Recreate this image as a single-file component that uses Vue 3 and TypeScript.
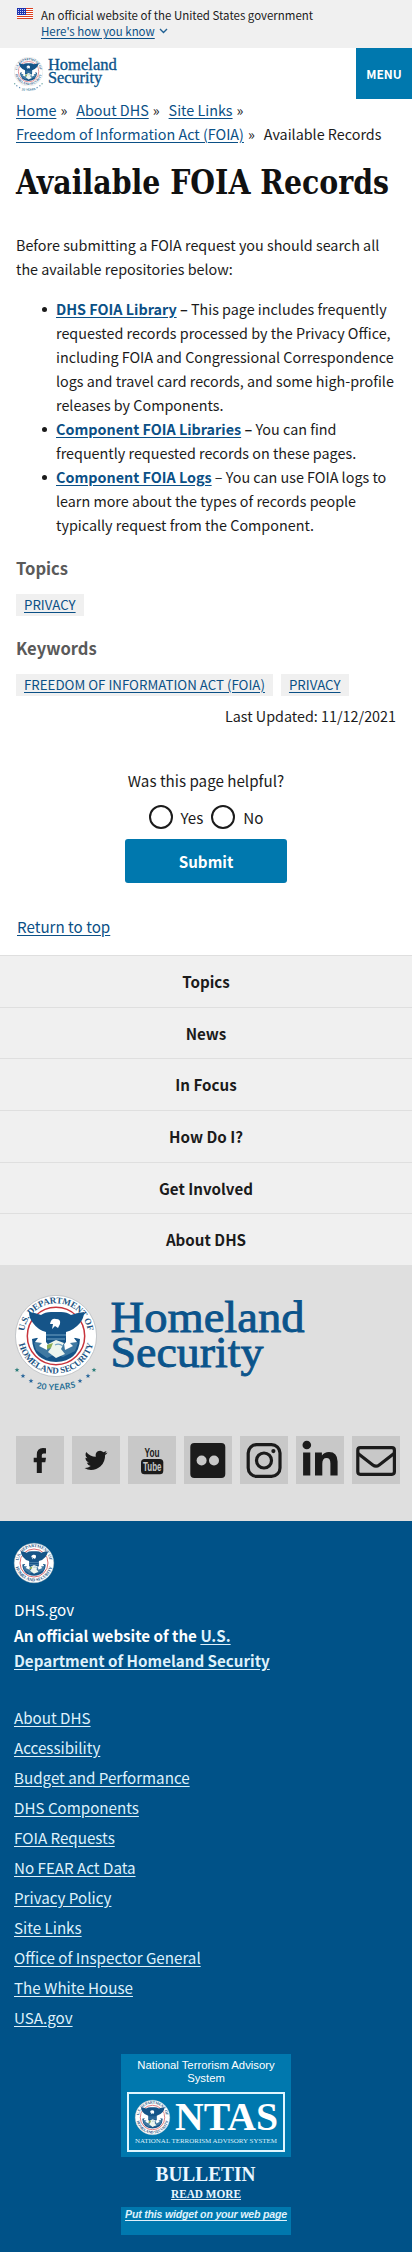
<script setup lang="ts">
import { defineComponent, h } from 'vue'

const crumbs: string[] = ['Home', 'About DHS', 'Site Links', 'Freedom of Information Act (FOIA)']
const navItems: string[] = ['Topics', 'News', 'In Focus', 'How Do I?', 'Get Involved', 'About DHS']
const footerLinks: string[] = [
  'About DHS', 'Accessibility', 'Budget and Performance', 'DHS Components', 'FOIA Requests',
  'No FEAR Act Data', 'Privacy Policy', 'Site Links', 'Office of Inspector General',
  'The White House', 'USA.gov',
]

// Round agency seal; the ring lettering needs a unique arc id per instance.
const Seal = defineComponent({
  props: { uid: { type: String, required: true } },
  setup(props) {
    const ring = (id: string, d: string, label: string, len: number) => [
      h('path', { id, d, fill: 'none' }),
      h('text', { 'font-family': '"Liberation Serif", serif', 'font-size': 9, 'font-weight': 700, fill: '#1d5584' }, [
        h('textPath', { href: '#' + id, startOffset: '50%', 'text-anchor': 'middle', textLength: len }, label),
      ]),
    ]
    return () => h('svg', { viewBox: '0 0 82 82' }, [
      h('circle', { cx: 41, cy: 41, r: 40.6, fill: '#fff', stroke: '#b9bdc0', 'stroke-width': 0.8 }),
      ...ring(props.uid + 't', 'M9.6 46.5 A32 32 0 1 1 72.4 46.5', 'U.S. DEPARTMENT OF', 92),
      ...ring(props.uid + 'b', 'M3.4 46 A38 38 0 0 0 78.6 46', 'HOMELAND SECURITY', 102),
      h('circle', { cx: 41, cy: 41, r: 28.7, fill: '#fff', stroke: '#c8343c', 'stroke-width': 1.5 }),
      h('path', { fill: '#155488', d: 'M17 44 Q18 66 41 67 Q64 66 65 44 L52 41 H30Z' }),
      h('path', { fill: '#5d92b4', d: 'M19 48 L25 44 31 48 36 44 41 48 47 44 53 48 58 44 63 48 60 56 48 62 41 59 32 63 21 55Z', opacity: 0.6 }),
      h('path', { fill: '#fff', d: 'M15 30 L27 34 34 42 32 55 24 51 27 48 20 47 23 43 17 41 20 37 16 36Z M67 30 L55 34 48 42 50 55 58 51 55 48 62 47 59 43 65 41 62 37 66 36Z' }),
      h('path', { fill: '#155488', d: 'M14 17 Q21 18 26 20 Q30 17 36 17 H46 Q52 17 56 20 Q61 18 69 17 Q69 23 65 28 Q59 35 51 37 V47 Q48 51 41 54 Q34 51 31 47 V37 Q23 35 18 28 Q14 23 14 17Z' }),
      h('path', { fill: '#fff', d: 'M35 29 Q36 23 41 24 Q46 24 45 29 L43 33 40 31 37 34 38 29Z' }),
      h('path', { stroke: '#72a3c4', 'stroke-width': 1, fill: 'none', d: 'M31 40 H51 M32 44 H50' }),
      h('path', { fill: '#eef5ee', d: 'M33 49 L41 45 49 48 46 54 50 59 41 63 33 57 36 53Z' }),
      h('path', { fill: '#8caf55', d: 'M32 50 L38 48 36 53 32 54Z' }),
      h('path', { stroke: '#72a3c4', 'stroke-width': 1.2, fill: 'none', d: 'M40 50 Q44 48 48 51' }),
    ])
  },
})

// Logotype: seal, anniversary stars and two-line wordmark.
const Logo = defineComponent({
  props: { uid: { type: String, required: true } },
  setup(props) {
    const star = 'M0 -2.4 L.7 -.8 2.4 -.7 1 .4 1.5 2.1 0 1.1 -1.5 2.1 -1 .4 -2.4 -.7 -.7 -.8Z'
    const stars: number[][] = [[2, 75], [8, 81], [16, 86], [65, 86], [73, 81], [79, 75]]
    const word = (y: number, len: number, label: string) =>
      h('text', { x: 95.5, y, textLength: len, lengthAdjust: 'spacingAndGlyphs', 'font-family': '"Liberation Serif", serif', 'font-size': 45, fill: '#0b548b', stroke: '#0b548b', 'stroke-width': 0.9 }, label)
    return () => h('svg', { viewBox: '0 0 290 98', overflow: 'visible' }, [
      h(Seal, { uid: props.uid, x: 0, y: 0, width: 82, height: 82 }),
      ...stars.map(([x, y], i) => h('path', { d: star, transform: `translate(${x} ${y})`, fill: i === 0 || i === 5 ? '#287c78' : '#27659a' })),
      h('path', { id: props.uid + 'y', d: 'M18 92.5 Q40.5 98 64 91.5', fill: 'none' }),
      h('text', { 'font-family': 'Lato, sans-serif', 'font-size': 8.5, 'font-weight': 700, fill: '#286f95' }, [
        h('textPath', { href: '#' + props.uid + 'y', startOffset: '50%', 'text-anchor': 'middle', textLength: 40 }, '20 YEARS'),
      ]),
      word(36.5, 194, 'Homeland'),
      word(72, 153, 'Security'),
    ])
  },
})
</script>

<template>
  <div class="page">
    <section class="banner">
      <svg class="flag" viewBox="0 0 16 11">
        <rect width="16" height="11" fill="#fff" />
        <path d="M0 .5H16M0 2.5H16M0 4.5H16M0 6.5H16M0 8.5H16M0 10.5H16" stroke="#db3e1f" />
        <rect width="9" height="7" fill="#1e33b1" />
        <path d="M1 1.5H9M1 3.5H9M1 5.5H9" stroke="#fff" stroke-width=".8" stroke-dasharray="1 1" />
      </svg>
      <div>
        <p class="b1">An official website of the United States government</p>
        <p class="b2">
          <a>Here's how you know</a>
          <svg width="9" height="6" viewBox="0 0 9 6"><path d="M1 1 L4.5 4.4 8 1" fill="none" stroke="#1f6093" stroke-width="1.4" /></svg>
        </p>
      </div>
    </section>

    <header class="header">
      <Logo uid="top" class="logo-top" />
      <button class="menu">MENU</button>
    </header>

    <main class="main">
      <nav class="crumbs">
        <template v-for="(c, i) in crumbs" :key="c">
          <br v-if="i === 3" />
          <span class="crumb"><a>{{ c }}</a><i>»</i></span>
        </template>
        <span>Available Records</span>
      </nav>
      <svg class="title" viewBox="0 0 380 50" role="heading">
        <text x="0" y="37.5" textLength="373" lengthAdjust="spacingAndGlyphs">Available FOIA Records</text>
      </svg>

      <p class="intro">Before submitting a FOIA request you should search all<br />the available repositories below:</p>
      <ul class="list">
        <li>
          <b><a>DHS FOIA Library</a> –</b> This page includes frequently<br />requested records processed by the Privacy Office,<br />including FOIA and Congressional Correspondence<br />logs and travel card records, and some high-profile<br />releases by Components.
        </li>
        <li><b><a>Component FOIA Libraries</a> –</b> You can find<br />frequently requested records on these pages.</li>
        <li><b><a>Component FOIA Logs</a></b> – You can use FOIA logs to<br />learn more about the types of records people<br />typically request from the Component.</li>
      </ul>

      <h3>Topics</h3>
      <div class="tags"><a>PRIVACY</a></div>
      <h3>Keywords</h3>
      <div class="tags"><a>FREEDOM OF INFORMATION ACT (FOIA)</a><a>PRIVACY</a></div>
      <p class="updated">Last Updated: 11/12/2021</p>

      <form class="poll">
        <p>Was this page helpful?</p>
        <div class="choices">
          <label><span class="radio"></span>Yes</label>
          <label><span class="radio"></span>No</label>
        </div>
        <button type="button">Submit</button>
      </form>
      <a class="return">Return to top</a>
    </main>

    <nav class="nav">
      <a v-for="n in navItems" :key="n">{{ n }}</a>
    </nav>

    <section class="brand">
      <Logo uid="big" class="logo-big" />
      <div class="social">
        <a><svg viewBox="0 0 48 48"><path d="M30 12.2V17.4H27.5Q25.8 17.4 25.8 19.2V21.7H30L29.3 26.2H25.8V37H20.8V26.2H17.7V21.7H20.8V18.7Q20.8 12.2 27 12.1Z" /></svg></a>
        <a><svg viewBox="0 0 48 48"><path d="M35.5 16.4 Q34.7 17.9 33.1 18.9 Q33.3 25.5 28.6 30.3 Q24.6 34 19 34 Q15.5 34 12.5 32.1 Q16 32.3 18.7 30 Q16 29.6 14.8 26.7 L17 26.6 Q13.5 25.2 13.4 21.8 L15.5 22.3 Q12.4 19.7 14.2 15.9 Q18 20.4 23.8 20.7 Q23 16.9 25.8 15.3 Q28.8 13.7 31.5 16.2 L34.5 15.1 Q34 16.8 32.7 17.4Z" /></svg></a>
        <a><svg viewBox="0 0 48 48"><text class="yt" x="16.5" y="21" textLength="15" lengthAdjust="spacingAndGlyphs">You</text><rect x="13" y="23" width="22.3" height="15.2" rx="3.5" /><text class="yt light" x="15" y="35.4" textLength="18.5" lengthAdjust="spacingAndGlyphs">Tube</text></svg></a>
        <a><svg viewBox="0 0 48 48"><rect x="6.3" y="7" width="35" height="35" rx="4" /><circle cx="17.6" cy="24.5" r="5" fill="#c8c8c8" /><circle cx="30" cy="24.5" r="5" fill="#c8c8c8" /></svg></a>
        <a><svg viewBox="0 0 48 48"><g fill="none" stroke="#1b1b1b" stroke-width="3.2"><rect x="8.2" y="8.6" width="31.8" height="31.8" rx="8.5" /><circle cx="24" cy="24.5" r="7.5" /></g><circle cx="33.4" cy="15.1" r="2.1" /></svg></a>
        <a><svg viewBox="0 0 48 48"><circle cx="10.8" cy="9" r="4.3" /><path d="M7.1 16.5H14.3V39.4H7.1Z M19 16.5H25.9V19.6Q28.2 15.9 33 15.9 Q41.5 15.9 41.6 25.5V39.4H34.4V27.4Q34.4 22.1 30.5 22.1 Q26.3 22.1 26.3 27.8V39.4H19Z" /></svg></a>
        <a><svg viewBox="0 0 48 48"><g fill="none" stroke="#1b1b1b" stroke-width="3.2" stroke-linejoin="round"><rect x="5.8" y="11.7" width="36.6" height="26.6" rx="2.5" /><path d="M6 17.4 L20.8 29 Q24 31.4 27.2 29 L42 17.4" /></g></svg></a>
      </div>
    </section>

    <footer class="footer">
      <Seal uid="foot" class="seal-foot" />
      <p class="ident">DHS.gov<br /><b>An official website of the <a>U.S.<br />Department of Homeland Security</a></b></p>
      <ul class="links">
        <li v-for="l in footerLinks" :key="l"><a>{{ l }}</a></li>
      </ul>
      <div class="widget">
        <div class="w-top">
          <p>National Terrorism Advisory<br />System</p>
          <div class="ntas">
            <Seal uid="ntas" class="seal-ntas" />
            <svg class="ntas-word" viewBox="0 0 104 32"><text x="0" y="28" textLength="103" lengthAdjust="spacingAndGlyphs">NTAS</text></svg>
            <svg class="ntas-sub" viewBox="0 0 142 8"><text x="0" y="6" textLength="142" lengthAdjust="spacingAndGlyphs">NATIONAL TERRORISM ADVISORY SYSTEM</text></svg>
          </div>
        </div>
        <svg class="bulletin" viewBox="0 0 170 50">
          <text x="34.5" y="24" font-size="22" textLength="100" lengthAdjust="spacingAndGlyphs">BULLETIN</text>
          <text x="50" y="40.5" font-size="13.5" textLength="70" lengthAdjust="spacingAndGlyphs">READ MORE</text>
          <path d="M50 42.5H120" stroke="#dff1fb" />
        </svg>
        <div class="w-bottom"><a>Put this widget on your web page</a></div>
      </div>
    </footer>
  </div>
</template>

<style>
body { background: #fff; }
</style>

<style scoped>
.page { width: 412px; height: 2252px; overflow: hidden; font: 15.17px/24px "Noto Sans CJK SC", "Noto Sans", sans-serif; color: #1b1b1b; }
p, ul, h3 { margin: 0; padding: 0; }
a { text-decoration: underline; color: #0b5086; text-underline-offset: 1.5px; }
svg { display: block; overflow: visible; }
button { border: 0; font-family: inherit; color: #fff; background: #0078ae; padding: 0; }
.banner { height: 48px; box-sizing: border-box; background: #f0f0f0; display: flex; padding: 7px 0 0 17px; white-space: nowrap; }
.flag { width: 16px; height: 11px; margin: 1px 8px 0 0; }
.b1, .b2 { font-size: 11.47px; line-height: 16px; }
.b2 { display: flex; align-items: center; gap: 4px; }
.header { height: 50px; display: flex; justify-content: space-between; align-items: flex-start; }
.logo-top { width: 103px; height: 35px; margin: 9px 0 0 13.5px; }
.menu { width: 56px; height: 51px; font-size: 12px; font-weight: 700; }
.main { height: 857px; box-sizing: border-box; padding: 0 16px; white-space: nowrap; }
.crumbs { height: 52px; font-size: 14.35px; }
.crumb { margin-right: 9px; }
.crumb i { font-style: normal; margin-left: 4px; }
.title { width: 380px; height: 50px; margin-top: 6px; }
.title text { font: 700 33px "DejaVu Serif Condensed", "DejaVu Serif", serif; fill: #111; }
.intro { margin-top: 27px; font-size: 14.35px; }
.list { margin-top: 16px; padding-left: 40px; font-size: 14.35px; list-style: none; }
.list li::before { content: ""; display: inline-block; width: 5px; height: 5px; border-radius: 50%; background: #1b1b1b; margin: 0 9px 3px -14px; }
.list b { font-weight: 700; }
h3 { font-size: 16.6px; line-height: 24px; font-weight: 700; color: #5a5a5a; margin-top: 19px; }
.tags { display: flex; gap: 8px; margin-top: 14px; }
.tags a { font-size: 13.3px; line-height: 21px; height: 22px; padding: 0 8px; background: #f0f0f0; }
.tags + h3 { margin-top: 20px; }
.updated { text-align: right; margin-top: 8px; font-size: 14.35px; }
.poll { display: flex; flex-direction: column; align-items: center; margin-top: 40px; }
.choices { display: flex; gap: 8px; margin-top: 13px; height: 24px; }
.choices label { display: flex; align-items: center; gap: 8px; }
.radio { width: 20px; height: 20px; border: 2px solid #1b1b1b; border-radius: 50%; }
.poll button { width: 162px; height: 44px; border-radius: 3px; font-size: 15.2px; font-weight: 700; margin-top: 10px; }
.return { display: block; margin: 31px 0 0 1px; width: max-content; }
.nav { height: 310px; display: flex; flex-direction: column; background: #f0f0f0; }
.nav a { flex: 1; border-top: 1px solid #dfdfdf; color: #1b1b1b; text-decoration: none; font-weight: 700; text-align: center; line-height: 50px; }
.brand { height: 256px; background: #dfdfdf; overflow: hidden; }
.logo-big { width: 290px; height: 98px; margin: 30px 0 0 15px; }
.social { display: flex; gap: 8px; margin: 43px 0 0 16px; }
.social a { width: 48px; height: 48px; background: #c8c8c8; }
.social svg { width: 48px; height: 48px; fill: #1b1b1b; }
.yt { font: 700 13px "Liberation Sans", sans-serif; }
.light { fill: #c8c8c8; }
.footer { height: 731px; background: #005288; color: #fff; white-space: nowrap; overflow: hidden; }
.footer a { color: #dff1fb; }
.seal-foot { width: 40px; height: 40px; margin: 22px 0 0 14px; }
.ident { margin: 14px 0 0 14px; line-height: 25.6px; }
.links { list-style: none; margin: 28px 0 0 14px; line-height: 30px; }
.widget { width: 170px; margin: 22px 0 0 121px; font-family: "Liberation Sans", Arial, sans-serif; }
.w-top { height: 103px; background: #0078ae; padding-top: 5px; box-sizing: border-box; }
.w-top p { font-size: 11.3px; line-height: 13px; text-align: center; }
.ntas { display: grid; grid-template-columns: 35px 104px; column-gap: 5px; box-sizing: border-box; width: 158px; height: 60px; margin: 7px 6px 5px; border: 2px solid #dff6ff; padding: 6px 0 0 6px; align-content: start; }
.seal-ntas { width: 35px; height: 35px; }
.ntas-word { width: 104px; height: 32px; margin-top: 2px; }
.ntas-word text { font: 700 40px "Liberation Serif", serif; fill: #fff; }
.ntas-sub { width: 142px; height: 8px; margin-top: 2px; grid-column: 1 / 3; }
.ntas-sub text { font: 7px "Liberation Serif", serif; fill: #dff1fb; }
.bulletin { width: 170px; height: 50px; }
.bulletin text { font-family: "Liberation Serif", serif; font-weight: 700; fill: #eaf7ff; }
.w-bottom { height: 28px; background: #0078ae; text-align: center; font-size: 10.6px; line-height: 15px; font-style: italic; font-weight: 700; letter-spacing: -.2px; }
</style>
